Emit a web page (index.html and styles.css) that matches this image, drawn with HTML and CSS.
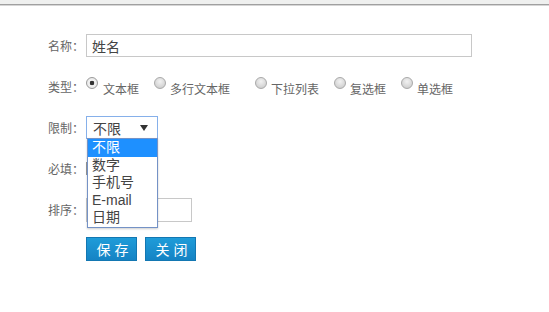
FILE: index.html
```
<!DOCTYPE html>
<html lang="zh-CN">
<head>
    <meta charset="UTF-8">
    <meta name="viewport" content="width=device-width, initial-scale=1.0">
    <title>字段设置</title>
    <link rel="stylesheet" href="styles.css">
</head>

<body>
    <div class="topbar"></div>

    <form class="form">
        <div class="row">
            <span class="label">名称：</span>
            <input class="text-input name-input" type="text" value="姓名">
        </div>

        <div class="row">
            <span class="label">类型：</span>
            <div class="radio-group">
                <label class="radio-item"><span class="radio checked"></span><span class="radio-text">文本框</span></label>
                <label class="radio-item wide"><span class="radio"></span><span class="radio-text">多行文本框</span></label>
                <label class="radio-item"><span class="radio"></span><span class="radio-text">下拉列表</span></label>
                <label class="radio-item"><span class="radio"></span><span class="radio-text">复选框</span></label>
                <label class="radio-item"><span class="radio"></span><span class="radio-text">单选框</span></label>
            </div>
        </div>

        <div class="row">
            <span class="label">限制：</span>
            <div class="select-wrap">
                <div class="select">
                    <span>不限</span>
                    <span class="arrow"></span>
                </div>
                <ul class="options">
                    <li class="selected">不限</li>
                    <li>数字</li>
                    <li>手机号</li>
                    <li>E-mail</li>
                    <li>日期</li>
                </ul>
            </div>
        </div>

        <div class="row">
            <span class="label">必填：</span>
            <span class="checkbox"></span>
        </div>

        <div class="row">
            <span class="label">排序：</span>
            <input class="text-input sort-input" type="text" value="">
        </div>

        <div class="actions">
            <button type="button" class="btn">保存</button>
            <button type="button" class="btn">关闭</button>
        </div>
    </form>
</body>
</html>
```

FILE: styles.css
```
body {
    margin: 0;
    background: #fff;
    font-family: "Liberation Sans", "Noto Sans CJK SC", sans-serif;
    color: #666;
}
.topbar {
    height: 4px;
    background: #eff0ef;
    border-bottom: 1px solid #a0a0a0;
    box-shadow: 0 1px 0 #d6d6d6;
}
.form {
    display: flex;
    flex-direction: column;
    gap: 18px;
    padding: 29px 0 0 48px;
}
.row {
    display: flex;
    align-items: center;
    height: 23px;
}
.label {
    width: 38px;
    flex-shrink: 0;
    font-size: 12px;
    line-height: 16px;
    padding-top: 3px;
    color: #666;
}
.text-input {
    box-sizing: border-box;
    height: 23px;
    border: 1px solid #c8c8c8;
    padding: 0 5px;
    font-family: inherit;
    font-size: 14px;
    color: #444;
    outline: none;
}
.name-input {
    width: 386px;
}
.sort-input {
    width: 106px;
    height: 24px;
}
.radio-group {
    display: flex;
    align-self: stretch;
}
.radio-item {
    display: flex;
    align-items: flex-start;
    gap: 4px;
    margin-right: 15px;
}
.radio-item:first-child {
    gap: 5px;
}
.radio-item.wide {
    margin-right: 25px;
}
.radio {
    width: 12px;
    height: 12px;
    box-sizing: border-box;
    margin-top: 2px;
    border-radius: 50%;
    border: 1px solid #a9a9a9;
    background: radial-gradient(circle at 50% 35%, #f2f2f2 0%, #d8d8d8 60%, #c4c4c4 100%);
}
.radio.checked {
    border-color: #9a9a9a;
    background: radial-gradient(circle, #333 0, #333 2px, #f4f4f4 2.6px, #e0e0e0 100%);
}
.radio-text {
    font-size: 12px;
    line-height: 16px;
    margin-top: 7px;
    color: #666;
}
.select-wrap {
    position: relative;
}
.select {
    box-sizing: border-box;
    width: 72px;
    height: 23px;
    border: 1px solid #86b0ea;
    display: flex;
    align-items: center;
    justify-content: space-between;
    padding: 1px 9px 0 6px;
    font-size: 14px;
    color: #444;
    background: #fff;
}
.arrow {
    width: 0;
    height: 0;
    border-left: 4px solid transparent;
    border-right: 4px solid transparent;
    border-top: 6px solid #333;
}
.options {
    position: absolute;
    top: calc(100% - 1px);
    left: 1px;
    width: 71px;
    box-sizing: border-box;
    margin: 0;
    padding: 0;
    list-style: none;
    background: #fff;
    border: 1px solid #7492c6;
    box-shadow: 0 1px 2px rgba(0, 0, 0, 0.2);
    z-index: 10;
}
.options li {
    height: 17.5px;
    line-height: 17.5px;
    padding-left: 4px;
    font-size: 14px;
    color: #444;
}
.options li.selected {
    background: #1e90ff;
    color: #fff;
}
.checkbox {
    width: 13px;
    height: 13px;
    box-sizing: border-box;
    border: 1px solid #999;
    background: #f4f4f4;
}
.actions {
    display: flex;
    gap: 8px;
    margin-top: -2px;
    padding-left: 38px;
}
.btn {
    box-sizing: border-box;
    width: 51px;
    height: 24px;
    padding: 0 0 0 6px;
    border: 1px solid #1377b2;
    background: linear-gradient(#1f9cd9, #1583c4);
    color: #fff;
    font-family: inherit;
    font-size: 14px;
    letter-spacing: 4px;
    cursor: pointer;
}
```
